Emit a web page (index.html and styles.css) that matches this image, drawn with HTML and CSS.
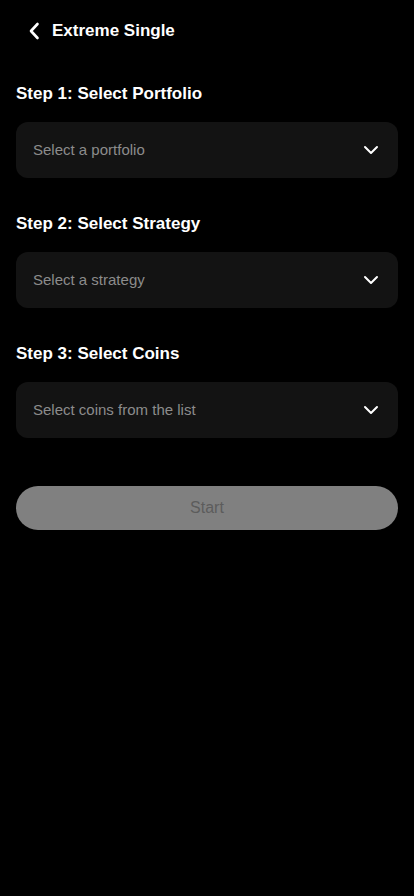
FILE: index.html
```html
<!DOCTYPE html>
<html lang="en">
<head>
  <meta charset="UTF-8">
  <title>Extreme Single</title>
  <meta name="viewport" content="width=device-width, initial-scale=1">
  <link rel="stylesheet" href="styles.css">
</head>
<body>
  <header class="topbar">
    <button class="back" aria-label="Back">
      <svg width="12" height="18" viewBox="0 0 12 18"><path d="M9.5 2 L3 9 L9.5 16" fill="none" stroke="#fff" stroke-width="2.6" stroke-linecap="round" stroke-linejoin="round"/></svg>
    </button>
    <h1>Extreme Single</h1>
  </header>
  <main class="content">
    <section class="step">
      <h2>Step 1: Select Portfolio</h2>
      <div class="select">
        <span>Select a portfolio</span>
        <svg class="chev" width="16" height="10" viewBox="0 0 16 10"><path d="M2 2 L8 8 L14 2" fill="none" stroke="#fff" stroke-width="2" stroke-linecap="round" stroke-linejoin="round"/></svg>
      </div>
    </section>
    <section class="step">
      <h2>Step 2: Select Strategy</h2>
      <div class="select">
        <span>Select a strategy</span>
        <svg class="chev" width="16" height="10" viewBox="0 0 16 10"><path d="M2 2 L8 8 L14 2" fill="none" stroke="#fff" stroke-width="2" stroke-linecap="round" stroke-linejoin="round"/></svg>
      </div>
    </section>
    <section class="step">
      <h2>Step 3: Select Coins</h2>
      <div class="select">
        <span>Select coins from the list</span>
        <svg class="chev" width="16" height="10" viewBox="0 0 16 10"><path d="M2 2 L8 8 L14 2" fill="none" stroke="#fff" stroke-width="2" stroke-linecap="round" stroke-linejoin="round"/></svg>
      </div>
    </section>
    <button class="start" disabled>Start</button>
  </main>
</body>
</html>
```

FILE: styles.css
```css
body {
  margin: 0;
  background: #000;
  color: #fff;
  font-family: 'Liberation Sans', Arial, sans-serif;
}
.topbar {
  height: 60px;
  display: flex;
  align-items: center;
  padding: 1px 0 0 28px;
  gap: 12px;
}
.back {
  background: none;
  border: none;
  padding: 0;
  display: flex;
  align-items: center;
}
.topbar h1 {
  margin: 0;
  font-size: 17px;
  font-weight: 700;
}
.content {
  padding: 23px 16px 0 16px;
}
.step {
  margin-bottom: 36px;
}
.step h2 {
  margin: 0 0 18px 0;
  font-size: 17px;
  line-height: 20px;
  font-weight: 700;
}
.select {
  height: 56px;
  box-sizing: border-box;
  background: #131313;
  border-radius: 12px;
  display: flex;
  align-items: center;
  justify-content: space-between;
  padding: 0 19px 1px 17px;
}
.select span {
  font-size: 15px;
  color: #8c8c8c;
}
.start {
  display: block;
  width: 100%;
  height: 44px;
  margin-top: 48px;
  border: none;
  border-radius: 22px;
  background: #808080;
  color: #5c5c5c;
  font-family: inherit;
  font-size: 16px;
}
```
